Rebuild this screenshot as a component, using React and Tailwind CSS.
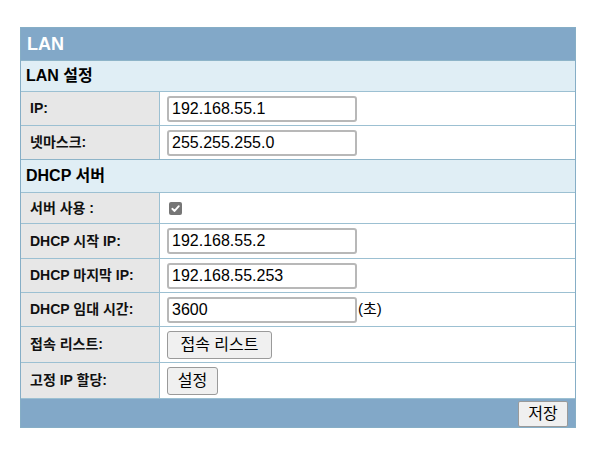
import React from "react";

const font = { fontFamily: '"Liberation Sans", "Noto Sans CJK KR", sans-serif' };

function Input({ value }) {
  return (
    <div className="w-[190px] h-[26px] border-2 border-[#b8b8b8] rounded-[3px] bg-white flex items-center pl-[3px] text-[16px] text-black leading-none">
      {value}
    </div>
  );
}

function Btn({ children, className = "" }) {
  return (
    <div className={"h-[28px] px-[8px] border border-[#9a9a9a] rounded-[3px] bg-[#f0f0f0] flex items-center justify-center text-[16px] text-black leading-none " + className}>
      {children}
    </div>
  );
}

function Row({ label, children, h = "h-[34px]", labelClass = "font-bold" }) {
  return (
    <div className={"grid grid-cols-[139px_1fr] border-t border-[#9cc0d2] " + h}>
      <div className={"bg-[#e7e7e7] border-r border-[#9cc0d2] flex items-center pl-[9px] text-[14px] text-[#111] " + labelClass}>
        {label}
      </div>
      <div className="bg-white flex items-center pl-[7px]">{children}</div>
    </div>
  );
}

function Section({ title, h = "h-[31px]" }) {
  return (
    <div className={"border-t border-[#8eb4c8] bg-[#e0eef5] flex items-center pl-[5px] text-[16px] font-bold text-black " + h}>
      {title}
    </div>
  );
}

export default function App() {
  return (
    <div className="w-[600px] h-[465px] bg-white" style={font}>
      <div className="pt-[27px] pl-[20px]">
        <div className="w-[556px] border border-[#86aec6]">
          <div className="h-[32px] bg-[#82a8c8] flex items-center pl-[6px] text-[18px] font-bold text-white">
            LAN
          </div>
          <Section title="LAN 설정" h="h-[31px]" />
          <Row label="IP:"><Input value="192.168.55.1" /></Row>
          <Row label="넷마스크:" labelClass="font-bold"><Input value="255.255.255.0" /></Row>
          <Section title="DHCP 서버" h="h-[33px]" />
          <Row label="서버 사용 :" h="h-[31px]">
            <div className="ml-[2px] w-[13px] h-[13px] rounded-[2px] bg-[#767676] flex items-center justify-center">
              <svg width="11" height="11" viewBox="0 0 12 12">
                <path d="M2.5 6.3 L5 8.7 L9.6 3.4" fill="none" stroke="white" strokeWidth="2" strokeLinecap="round" strokeLinejoin="round" />
              </svg>
            </div>
          </Row>
          <Row label="DHCP 시작 IP:" h="h-[35px]"><Input value="192.168.55.2" /></Row>
          <Row label="DHCP 마지막 IP:"><Input value="192.168.55.253" /></Row>
          <Row label="DHCP 임대 시간:">
            <Input value="3600" />
            <span className="text-[15px] text-black ml-[1px]">(초)</span>
          </Row>
          <Row label="접속 리스트:" h="h-[36px]" labelClass="font-bold">
            <Btn className="w-[105px]">접속 리스트</Btn>
          </Row>
          <Row label="고정 IP 할당:" h="h-[36px]">
            <Btn className="w-[51px]">설정</Btn>
          </Row>
          <div className="h-[29px] bg-[#82a8c8] flex items-end justify-end pr-[7px] border-t border-[#9cc0d2]">
            <div className="h-[26px] w-[50px] border border-[#9a9a9a] rounded-[2px] bg-[#f0f0f0] flex items-center justify-center text-[16px] text-black leading-none">
              저장
            </div>
          </div>
        </div>
      </div>
    </div>
  );
}
